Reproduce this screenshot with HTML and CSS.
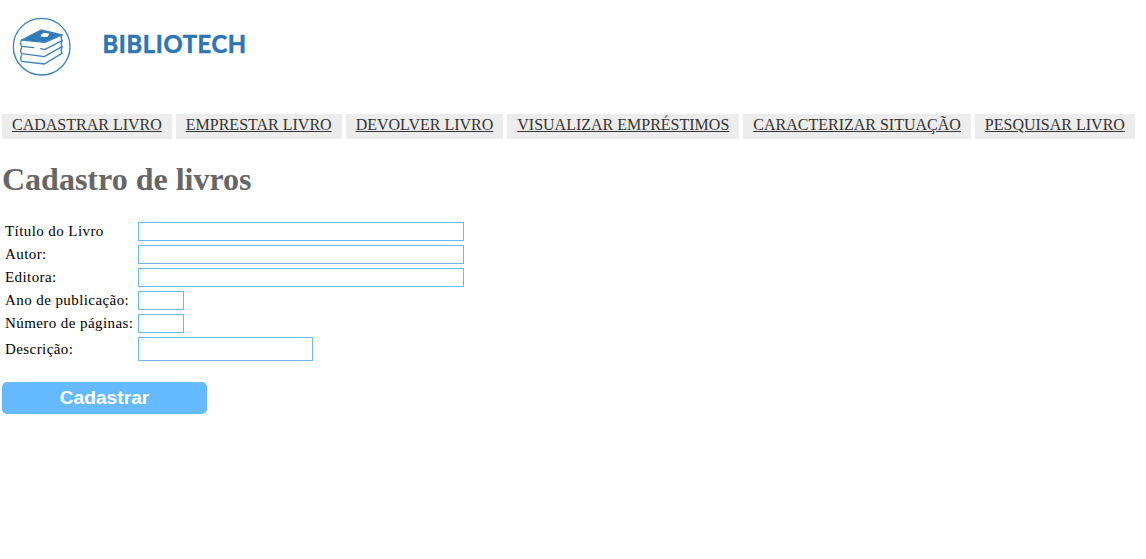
FILE: index.html
```html
<!DOCTYPE html>
<html lang="pt-BR">
<head>
<meta charset="utf-8">
<title>Bibliotech</title>
<link rel="stylesheet" href="styles.css">
</head>
<body>
<header class="brand">
  <svg class="brand-icon" viewBox="0 0 180 180" aria-hidden="true">
    <g fill="none" stroke="#3d80b9" stroke-width="4" stroke-linejoin="round" stroke-linecap="round">
      <circle cx="89" cy="89" r="85"/>
      <path d="M29 69 L87 39 L150 54 L99 76 Z" fill="#2f7ab8"/>
      <path d="M29 69 Q23 80 29 88 L65 92"/>
      <path d="M86 95 L98 98 L150 71 Q145 63 150 54"/>
      <path d="M29 92 Q23 104 29 110 L97 119 L150 89 Q145 81 150 71"/>
      <path d="M29 114 Q23 126 29 133 L97 141 L150 109 Q145 100 150 89"/>
    </g>
    <path class="book-label" d="M86 54 L95 47 L113 50 L106 60 L88 59 Z"/>
  </svg>
  <svg class="brand-name" viewBox="0 0 180 40">
    <text transform="translate(0.6 25.3) scale(0.93 1)">BIBLIOTECH</text>
  </svg>
</header>
<nav class="menu">
  <a href="#">CADASTRAR LIVRO</a>
  <a href="#">EMPRESTAR LIVRO</a>
  <a href="#">DEVOLVER LIVRO</a>
  <a href="#">VISUALIZAR EMPRÉSTIMOS</a>
  <a href="#">CARACTERIZAR SITUAÇÃO</a>
  <a href="#">PESQUISAR LIVRO</a>
</nav>
<main>
  <h1 class="title">Cadastro de livros</h1>
  <form class="form">
    <div class="fields">
      <label for="titulo">Título do Livro</label><input id="titulo" class="field">
      <label for="autor">Autor:</label><input id="autor" class="field">
      <label for="editora">Editora:</label><input id="editora" class="field">
      <label for="ano">Ano de publicação:</label><input id="ano" class="field short">
      <label for="paginas">Número de páginas:</label><input id="paginas" class="field short">
      <label for="descricao">Descrição:</label><input id="descricao" class="field description">
    </div>
    <button type="button" class="submit">Cadastrar</button>
  </form>
</main>
</body>
</html>
```
FILE: styles.css
```css
* { box-sizing: border-box; }
body {
  margin: 0;
  padding: 0 2px;
  background: #fff;
  font-family: "Liberation Serif", "Times New Roman", serif;
  color: #000;
}
.brand {
  display: flex;
  height: 114px;
  padding: 17px 0 0 10px;
}
.brand-icon { width: 60px; height: 60px; }
.book-label { fill: #fff; }
.brand-name {
  width: 180px;
  height: 40px;
  margin: 11px 0 0 30px;
  overflow: visible;
  font: 700 25.5px Lato, sans-serif;
  letter-spacing: 0.7px;
  fill: #2e75b6;
  stroke: #2e75b6;
  stroke-width: 0.6px;
}
.menu { display: flex; gap: 4px; }
.menu a {
  height: 25px;
  padding: 0 10px;
  background: #ececec;
  color: #333;
  font-size: 16px;
  line-height: 22px;
  white-space: nowrap;
}
.title {
  margin: 22px 0 24px;
  color: #666;
  font-size: 32px;
  line-height: 37px;
}
.fields {
  display: grid;
  grid-template-columns: 129px 326px;
  grid-template-rows: repeat(5, 19px) 24px;
  gap: 4px;
  padding-left: 3px;
  align-items: center;
}
.fields label {
  font-size: 15px;
  line-height: 17px;
  letter-spacing: 0.42px;
  white-space: nowrap;
}
.field {
  width: 326px;
  height: 19px;
  border: 1px solid #66b8fa;
  background: #fff;
}
.short { width: 46px; }
.description { width: 175px; height: 24px; }
.submit {
  display: block;
  width: 205px;
  height: 32px;
  margin-top: 21px;
  padding: 0;
  border: 0;
  border-radius: 5px;
  background: #66baff;
  color: #fff;
  font: 700 19.2px/32px "Liberation Sans", Arial, sans-serif;
}
```
